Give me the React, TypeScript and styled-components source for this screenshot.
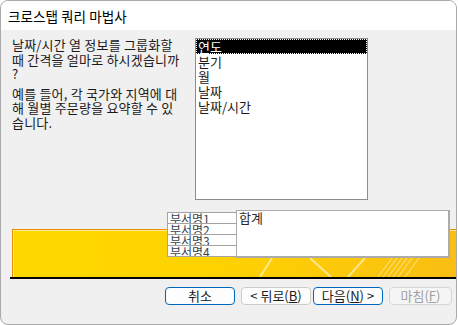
import React from 'react'
import styled, { createGlobalStyle } from 'styled-components'

const GlobalStyle = createGlobalStyle`
  html, body {
    margin: 0;
    padding: 0;
    background: #ffffff;
  }
  body {
    font-family: "Noto Sans CJK KR", "Noto Sans", sans-serif;
  }
`

const intervals = ['연도', '분기', '월', '날짜', '날짜/시간']
const rowNames = ['부서명1', '부서명2', '부서명3', '부서명4']

const Wizard = () => {
  return (
    <Window>
      <GlobalStyle />
      <TitleBar>크로스탭 쿼리 마법사</TitleBar>
      <Body>
        <TopRow>
          <Prompt>
            <Para>
              날짜/시간 열 정보를 그룹화할
              <br />
              때 간격을 얼마로 하시겠습니까
              <br />?
            </Para>
            <Para>
              예를 들어, 각 국가와 지역에 대
              <br />
              해 월별 주문량을 요약할 수 있
              <br />
              습니다.
            </Para>
          </Prompt>
          <ListBox>
            {intervals.map((label, i) => (
              <ListItem key={label} $selected={i === 0}>
                {label}
              </ListItem>
            ))}
          </ListBox>
        </TopRow>
        <Sample>
          <Banner>
            <Stripes width="444" height="47" viewBox="0 0 444 47">
              <g stroke="#ffffff" strokeOpacity="0.55" fill="none">
                <line x1="247" y1="47" x2="259" y2="28" strokeWidth="2" />
                <line x1="297" y1="28" x2="318" y2="47" strokeWidth="2" />
                <line x1="335" y1="47" x2="352" y2="28" strokeWidth="2" />
                <line x1="365" y1="47" x2="379" y2="28" strokeWidth="1" />
                <line x1="370" y1="47" x2="384" y2="28" strokeWidth="1" />
                <line x1="375" y1="47" x2="389" y2="28" strokeWidth="1" />
                <line x1="380" y1="47" x2="394" y2="28" strokeWidth="1" />
                <line x1="385" y1="47" x2="399" y2="28" strokeWidth="1" />
                <line x1="392" y1="47" x2="406" y2="28" strokeWidth="1" />
              </g>
            </Stripes>
          </Banner>
          <BaseLine />
          <RowHeaders>
            {rowNames.map((name) => (
              <RowHeader key={name}>{name}</RowHeader>
            ))}
          </RowHeaders>
          <ValueBox>합계</ValueBox>
        </Sample>
        <ButtonRow>
          <Button $primary $width={70}>
            취소
          </Button>
          <NavGroup>
            <Button $width={70}>
              &lt; 뒤로(<u>B</u>)
            </Button>
            <Button $primary $width={70}>
              다음(<u>N</u>) &gt;
            </Button>
          </NavGroup>
          <Button $disabled $width={63}>
            마침(<u>F</u>)
          </Button>
        </ButtonRow>
      </Body>
    </Window>
  )
}

const Window = styled.div`
  width: 457px;
  height: 325px;
  box-sizing: border-box;
  border: 1px solid #a9a9a9;
  border-radius: 8px;
  overflow: hidden;
  display: flex;
  flex-direction: column;
  background: #f0f0f0;
`
const TitleBar = styled.div`
  height: 29px;
  flex-shrink: 0;
  background: #ffffff;
  display: flex;
  align-items: center;
  padding-left: 7px;
  font-size: 13.6px;
  color: #000000;
`
const Body = styled.div`
  flex: 1;
  display: flex;
  flex-direction: column;
`
const TopRow = styled.div`
  display: flex;
  padding: 8px 0 0 11px;
`
const Prompt = styled.div`
  width: 183px;
  font-size: 13px;
  letter-spacing: 0.2px;
  line-height: 14.5px;
  color: #1a1a1a;
  white-space: nowrap;
`
const Para = styled.p`
  margin: 0 0 5px 0;
`
const ListBox = styled.div`
  width: 173px;
  height: 162px;
  box-sizing: border-box;
  border: 1px solid #8c8c8c;
  background: #ffffff;
`
const ListItem = styled.div<{ $selected?: boolean }>`
  height: 15px;
  line-height: 15px;
  padding-left: 2px;
  font-size: 13px;
  color: ${(p) => (p.$selected ? '#ffffff' : '#1a1a1a')};
  background: ${(p) => (p.$selected ? '#000000' : 'transparent')};
  outline: ${(p) => (p.$selected ? '1px dotted #ffffff' : 'none')};
  outline-offset: -1px;
`
const Sample = styled.div`
  position: relative;
  margin-top: 10px;
  height: 69px;
`
const Banner = styled.div`
  position: relative;
  margin: 19px 0 0 11px;
  height: 47px;
  border-top: 1px solid #f08a00;
  border-left: 1px solid #f08a00;
  box-shadow: inset 1px 1px 0 rgba(255, 255, 255, 0.6);
  background: linear-gradient(100deg, #ffd800 0%, #fed300 45%, #fcc80a 75%, #f9bd14 100%);
  overflow: hidden;
`
const Stripes = styled.svg`
  position: absolute;
  left: 0;
  top: 0;
`
const BaseLine = styled.div`
  margin-left: 9px;
  height: 2px;
  background: #000000;
`
const RowHeaders = styled.div`
  position: absolute;
  left: 166px;
  top: 2px;
  width: 70px;
  box-sizing: border-box;
  border: 1px solid #a3a3a3;
  border-bottom: none;
  background: #ffffff;
`
const RowHeader = styled.div`
  height: 10px;
  line-height: 11px;
  border-bottom: 1px solid #a3a3a3;
  padding-left: 2px;
  font-size: 12px;
  color: #3a3f4a;
  overflow: hidden;
`
const ValueBox = styled.div`
  position: absolute;
  left: 235px;
  top: 0;
  width: 214px;
  height: 48px;
  box-sizing: border-box;
  border: 1px solid #ababab;
  border-right-width: 2px;
  border-bottom-width: 2px;
  background: #ffffff;
  padding-left: 2px;
  font-size: 13px;
  line-height: 13px;
  color: #2a2a2a;
`
const ButtonRow = styled.div`
  display: flex;
  justify-content: flex-end;
  gap: 6px;
  margin-top: 8px;
  padding-right: 4px;
`
const NavGroup = styled.div`
  display: flex;
  gap: 2px;
`
const Button = styled.div<{ $primary?: boolean; $disabled?: boolean; $width: number }>`
  width: ${(p) => p.$width}px;
  height: 18px;
  box-sizing: border-box;
  border: 1px solid ${(p) => (p.$primary ? '#0067c0' : p.$disabled ? '#d6d6d6' : '#cccccc')};
  border-radius: 4px;
  background: ${(p) => (p.$disabled ? '#f5f5f5' : '#fdfdfd')};
  color: ${(p) => (p.$disabled ? '#a0a0a0' : '#1a1a1a')};
  font-size: 13px;
  line-height: 16px;
  text-align: center;
  white-space: nowrap;

  u {
    text-underline-offset: 1px;
  }
`

export default function App() {
  return <Wizard />
}
